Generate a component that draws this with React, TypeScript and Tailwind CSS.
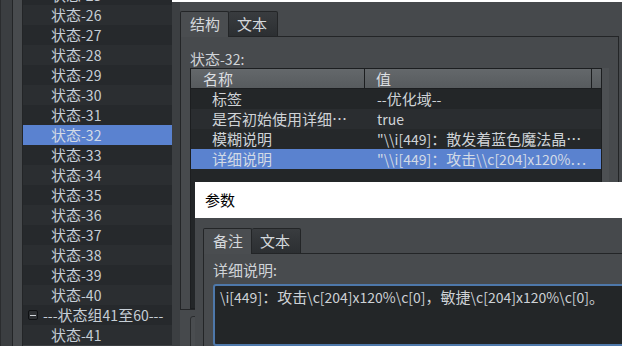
import React from 'react';

const listItems = [25, 26, 27, 28, 29, 30, 31, 32, 33, 34, 35, 36, 37, 38, 39, 40];

const rows = [
  { name: '标签', value: '--优化域--', bg: 'bg-[#232628]' },
  { name: '是否初始使用详细…', value: 'true', bg: 'bg-[#2a2d30]' },
  { name: '模糊说明', value: '"\\\\i[449]：散发着蓝色魔法晶…', bg: 'bg-[#25282a]' },
  { name: '详细说明', value: '"\\\\i[449]：攻击\\\\c[204]x120%…', bg: 'bg-[#5a82cf]' },
];

// CJK glyphs sit a bit larger than the latin ones in the original UI font
const Mixed = ({ text }: { text: string }) => (
  <>
    {text.split(/([\x20-\x7e]+)/).map((part, i) =>
      /^[\x20-\x7e]+$/.test(part) ? (
        <span key={i} className="text-[14px]">
          {part}
        </span>
      ) : (
        part
      )
    )}
  </>
);

const App = () => {
  return (
    <div className="relative w-[622px] h-[346px] overflow-hidden flex bg-[#3c3f42] text-[15px] text-[#c6ced6] font-['Noto_Sans_CJK_SC','Noto_Sans',sans-serif]">
      {/* left strips */}
      <div className="w-[12px] h-full bg-[#3b3e41] border-l border-[#2a2c2e]" />
      <div className="w-[1px] h-full bg-[#232527]" />
      <div className="w-[9px] h-full bg-[#484b4e]" />
      <div className="w-[1px] h-full bg-[#232527]" />

      {/* state list */}
      <div className="w-[149px] h-full overflow-hidden">
        <div className="-mt-[15px] flex flex-col">
          {listItems.map((n, i) => (
            <div
              key={n}
              className={`h-[20px] leading-[20px] pl-[28px] whitespace-nowrap ${
                n === 32 ? 'bg-[#5a82d0] text-[#d2dae6]' : i % 2 === 0 ? 'bg-[#26292c]' : 'bg-[#2b2e31]'
              }`}
            >
              <Mixed text={`状态-${n}`} />
            </div>
          ))}
          <div className="h-[20px] leading-[20px] pl-[5px] flex items-center gap-[5px] whitespace-nowrap bg-[#26292c]">
            <div className="w-[10px] h-[10px] shrink-0 rounded-[2px] border border-[#0f1113] bg-[#2e3134] flex items-center justify-center">
              <div className="w-[6px] h-[1px] bg-[#d0d4d8]" />
            </div>
            <span>
              <Mixed text="---状态组41至60---" />
            </span>
          </div>
          <div className="h-[20px] leading-[20px] pl-[28px] bg-[#2b2e31]">
            <Mixed text="状态-41" />
          </div>
        </div>
      </div>

      {/* right panel */}
      <div className="flex-1 flex flex-col">
        <div className="h-[2px] bg-white" />
        <div className="flex-1 flex">
          <div className="w-[8px] bg-[#3c3f42]" />
          <div className="flex-1 flex flex-col bg-[#46494c] pt-[9px] pr-[3px]">
            {/* tabs */}
            <div className="flex items-end h-[26px]">
              <div className="w-[49px] h-[26px] leading-[24px] pl-[9px] bg-[#4a4d50] border border-b-0 border-[#232527] rounded-t-[2px] text-[#d4d8dc]">
                结构
              </div>
              <div className="w-[49px] h-[26px] leading-[24px] pl-[8px] bg-gradient-to-b from-[#393c3f] to-[#2c2f32] border border-l-0 border-[#232527] rounded-t-[2px] text-[#d4d8dc]">
                文本
              </div>
              <div className="flex-1 border-b border-[#232527]" />
            </div>
            {/* pane */}
            <div className="flex-1 flex flex-col border-x border-b border-[#232527] px-[9px] bg-[#474a4d]">
              <div className="mt-[13px] h-[18px] leading-[18px] text-[#d0d4d8]">
                <Mixed text="状态-32:" />
              </div>
              <div className="flex-1 flex">
                <div className="flex-1 flex flex-col border border-[#1c1e20] bg-[#232628]">
                  <div className="flex h-[20px] leading-[19px] bg-gradient-to-b from-[#64686b] to-[#575b5e] border-b border-[#1c1e20] text-[#dcdfe2]">
                    <div className="w-[174px] pl-[12px] border-r border-[#1c1e20]">名称</div>
                    <div className="w-[227px] pl-[11px] border-r border-[#1c1e20]">值</div>
                    <div className="flex-1" />
                  </div>
                  {rows.map((r) => (
                    <div
                      key={r.name}
                      className={`flex h-[20px] leading-[20px] ${r.bg} ${r.bg === 'bg-[#5a82cf]' ? 'text-[#d2dae6]' : 'text-[#cfd3d7]'}`}
                    >
                      <div className="w-[175px] pl-[21px] whitespace-nowrap overflow-hidden">{r.name}</div>
                      <div className="w-[227px] pl-[11px] whitespace-nowrap overflow-hidden">
                        <Mixed text={r.value} />
                      </div>
                    </div>
                  ))}
                </div>
                <div className="w-[7px] bg-[#4d5053]" />
              </div>
            </div>
            <div className="h-[36px] pl-[10px] pt-[6px]">
              <div className="w-[20px] h-[40px] rounded-[3px] border border-[#2a2c2e] bg-[#4a4d50]" />
            </div>
          </div>
        </div>
      </div>

      {/* parameter dialog */}
      <div className="absolute left-[195px] top-[182px] right-0 bottom-0 flex flex-col">
        <div className="h-[36px] bg-white pl-[10px] leading-[36px] text-black">参数</div>
        <div className="flex-1 bg-[#46494c] pl-[8px] pt-[10px] flex flex-col">
          <div className="flex items-end h-[26px]">
            <div className="w-[49px] h-[26px] leading-[24px] pl-[9px] bg-[#4a4d50] border border-b-0 border-[#232527] rounded-t-[2px] text-[#d4d8dc]">
              备注
            </div>
            <div className="w-[49px] h-[26px] leading-[24px] pl-[8px] bg-gradient-to-b from-[#393c3f] to-[#2c2f32] border border-l-0 border-[#232527] rounded-t-[2px] text-[#d4d8dc]">
              文本
            </div>
            <div className="flex-1 border-b border-[#232527]" />
          </div>
          <div className="flex-1 flex flex-col border-l border-[#232527] bg-[#484b4e] pl-[9px] pt-[7px]">
            <div className="h-[18px] leading-[18px] text-[#d0d4d8]">
              <Mixed text="详细说明:" />
            </div>
            <div className="mt-[5px] flex-1 -mr-[10px] border-2 border-[#4e78aa] rounded-[3px] bg-[#232628] pl-[5px] pt-[1px]">
              <div className="leading-[20px] whitespace-nowrap text-[#cdd1d5]">
                <Mixed text="\i[449]：攻击\c[204]x120%\c[0]，敏捷\c[204]x120%\c[0]。" />
              </div>
            </div>
          </div>
        </div>
      </div>
    </div>
  );
};

export default App;
